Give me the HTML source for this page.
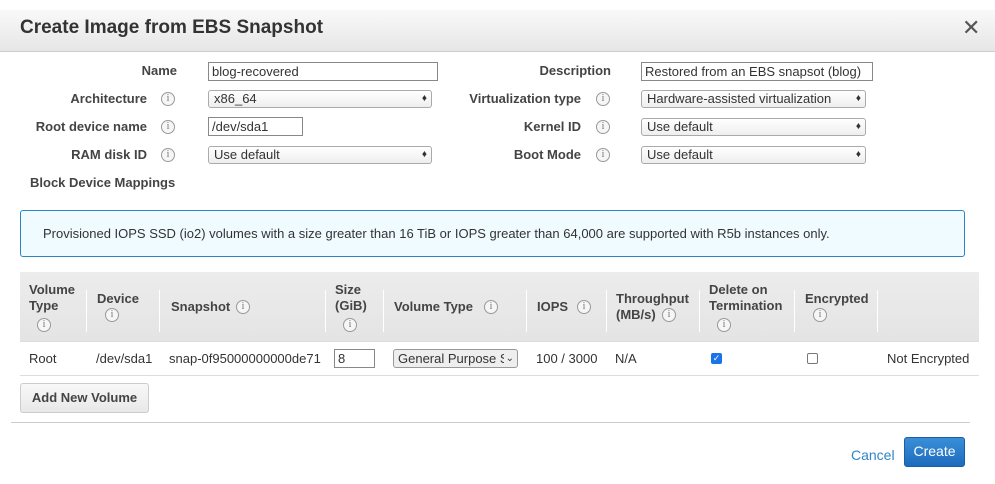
<!DOCTYPE html>
<html><head><style>
*{box-sizing:border-box;margin:0;padding:0}
body{width:995px;height:484px;background:#fff;font-family:"Liberation Sans",Arial,sans-serif;font-size:13px;color:#333;position:relative;overflow:hidden}
.a{position:absolute;white-space:nowrap}
.hdr{position:absolute;left:0;top:10px;width:995px;height:42px;background:linear-gradient(#f9f9f9,#e6e6e6);border-bottom:1px solid #ccc}
.lbl{font-weight:bold;color:#444;text-align:right}
.i{position:absolute;width:14px;height:14px;border:1px solid #999;border-radius:50%;font-size:10px;line-height:12px;text-align:center;color:#777;background:#f6f6f6;font-family:"Liberation Serif",serif}
.inp{position:absolute;height:19px;border:1px solid #888;padding:1px 3px;font-size:13px;line-height:15px;color:#333}
.sel{position:absolute;height:18px;border:1px solid #aaa;border-radius:3px;background:linear-gradient(#fff,#eee);padding:0 5px;font-size:13px;line-height:16px;color:#333}
.sel:after{content:"\2666";position:absolute;right:4px;top:0;font-size:10px;color:#333}
.th{position:absolute;font-weight:bold;color:#444;line-height:16px}
.sep{position:absolute;top:290px;width:1px;height:42px;background:#fff}
</style></head><body>
<div class="hdr"></div>
<div class="a" style="left:20px;top:17px;font-size:19px;font-weight:bold;color:#333">Create Image from EBS Snapshot</div>
<div class="a" style="left:962px;top:15px;font-size:22px;color:#555">✕</div>

<div class="a lbl" style="left:0;width:177px;top:63px">Name</div>
<div class="a lbl" style="left:0;width:147px;top:91px">Architecture</div>
<div class="a lbl" style="left:0;width:147px;top:119px">Root device name</div>
<div class="a lbl" style="left:0;width:147px;top:147px">RAM disk ID</div>
<div class="a lbl" style="left:30px;top:175px">Block Device Mappings</div>
<div class="i" style="left:161px;top:92px">i</div>
<div class="i" style="left:161px;top:120px">i</div>
<div class="i" style="left:161px;top:148px">i</div>
<div class="inp" style="left:208px;top:62px;width:230px">blog-recovered</div>
<div class="sel" style="left:208px;top:90px;width:224px">x86_64</div>
<div class="inp" style="left:208px;top:117px;width:95px">/dev/sda1</div>
<div class="sel" style="left:208px;top:146px;width:224px">Use default</div>

<div class="a lbl" style="left:450px;width:161px;top:63px">Description</div>
<div class="a lbl" style="left:450px;width:131px;top:91px">Virtualization type</div>
<div class="a lbl" style="left:450px;width:131px;top:119px">Kernel ID</div>
<div class="a lbl" style="left:450px;width:131px;top:147px">Boot Mode</div>
<div class="i" style="left:596px;top:92px">i</div>
<div class="i" style="left:596px;top:120px">i</div>
<div class="i" style="left:596px;top:148px">i</div>
<div class="inp" style="left:641px;top:62px;width:232px">Restored from an EBS snapsot (blog)</div>
<div class="sel" style="left:641px;top:90px;width:225px">Hardware-assisted virtualization</div>
<div class="sel" style="left:641px;top:118px;width:225px">Use default</div>
<div class="sel" style="left:641px;top:146px;width:225px">Use default</div>

<div class="a" style="left:20px;top:210px;width:945px;height:47px;border:1px solid #2b86c1;border-radius:3px;background:#f0fbff"></div>
<div class="a" style="left:43px;top:226px;color:#333">Provisioned IOPS SSD (io2) volumes with a size greater than 16 TiB or IOPS greater than 64,000 are supported with R5b instances only.</div>

<div class="a" style="left:20px;top:272px;width:959px;height:70px;background:linear-gradient(#ececec,#e4e4e4);border-bottom:1px solid #ddd"></div>
<div class="sep" style="left:86px"></div><div class="sep" style="left:159px"></div><div class="sep" style="left:325px"></div><div class="sep" style="left:383px"></div><div class="sep" style="left:526px"></div><div class="sep" style="left:606px"></div><div class="sep" style="left:699px"></div><div class="sep" style="left:794px"></div><div class="sep" style="left:877px"></div>
<div class="th a" style="left:29px;top:282px">Volume<br>Type</div><div class="i" style="left:37px;top:318px">i</div>
<div class="th a" style="left:97px;top:291px">Device</div><div class="i" style="left:105px;top:308px">i</div>
<div class="th a" style="left:171px;top:299px">Snapshot</div><div class="i" style="left:236px;top:300px">i</div>
<div class="th a" style="left:335px;top:282px">Size<br>(GiB)</div><div class="i" style="left:343px;top:318px">i</div>
<div class="th a" style="left:394px;top:299px">Volume Type</div><div class="i" style="left:484px;top:300px">i</div>
<div class="th a" style="left:537px;top:299px">IOPS</div><div class="i" style="left:577px;top:300px">i</div>
<div class="th a" style="left:616px;top:291px">Throughput<br>(MB/s)</div><div class="i" style="left:662px;top:308px">i</div>
<div class="th a" style="left:709px;top:282px">Delete on<br>Termination</div><div class="i" style="left:717px;top:318px">i</div>
<div class="th a" style="left:805px;top:291px">Encrypted</div><div class="i" style="left:813px;top:308px">i</div>

<div class="a" style="left:29px;top:351px">Root</div>
<div class="a" style="left:96px;top:351px">/dev/sda1</div>
<div class="a" style="left:169px;top:351px">snap-0f95000000000de71</div>
<div class="inp" style="left:334px;top:349px;width:41px">8</div>
<div class="a" style="left:393px;top:349px;width:125px;height:19px;border:1px solid #999;border-radius:3px;background:#eee;padding:0 4px;line-height:17px;overflow:hidden">General Purpose S<span style="position:absolute;right:3px;top:0;background:#eee;padding-left:2px;font-size:10px">⌄</span></div>
<div class="a" style="left:536px;top:351px">100 / 3000</div>
<div class="a" style="left:615px;top:351px">N/A</div>
<div class="a" style="left:711px;top:353px;width:11px;height:11px;background:#1a73e8;border-radius:2px;color:#fff;font-size:9px;line-height:11px;text-align:center">✓</div>
<div class="a" style="left:807px;top:353px;width:11px;height:11px;border:1px solid #777;border-radius:2px"></div>
<div class="a" style="left:887px;top:351px">Not Encrypted</div>
<div class="a" style="left:20px;top:375px;width:959px;height:1px;background:#ddd"></div>

<div class="a" style="left:20px;top:383px;width:129px;height:30px;border:1px solid #ccc;border-radius:3px;background:linear-gradient(#f8f8f8,#e8e8e8);font-weight:bold;color:#444;text-align:center;line-height:28px">Add New Volume</div>
<div class="a" style="left:11px;top:422px;width:959px;height:1px;background:#ccc"></div>
<div class="a" style="left:851px;top:447px;color:#2f86c6;font-size:14px">Cancel</div>
<div class="a" style="left:904px;top:437px;width:61px;height:30px;border:1px solid #1a5fa5;border-radius:3px;background:linear-gradient(#3a8fd8,#1e6bbd);color:#fff;font-size:14px;text-align:center;line-height:27px">Create</div>
</body></html>
